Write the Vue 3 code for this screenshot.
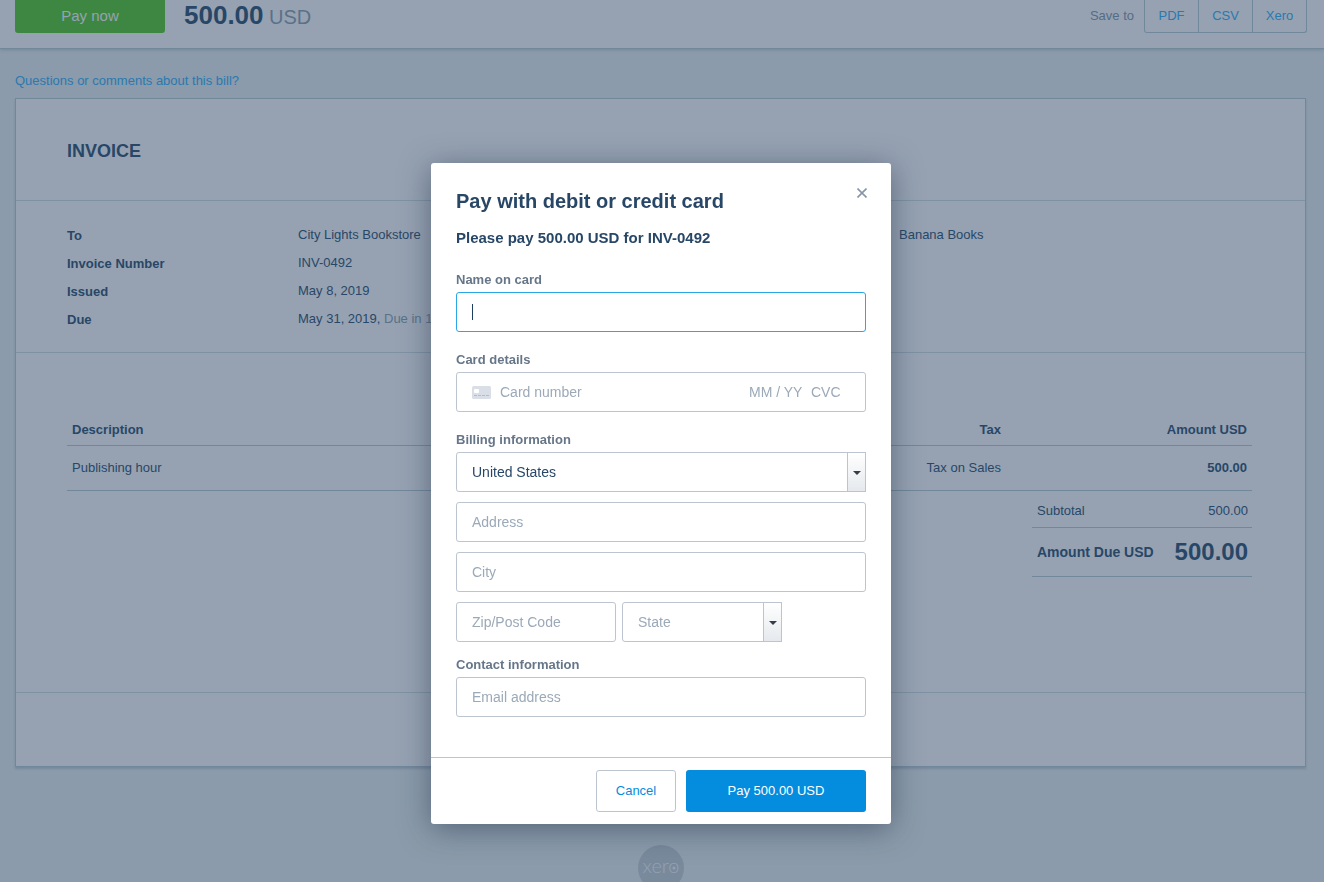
<script setup>
import { ref } from 'vue'

const open = ref(true)
const country = ref('United States')
const state = ref('')
const name = ref('')

const details = [
  { label: 'To', value: 'City Lights Bookstore' },
  { label: 'Invoice Number', value: 'INV-0492' },
  { label: 'Issued', value: 'May 8, 2019' },
  { label: 'Due', value: 'May 31, 2019,', note: 'Due in 1' },
]
</script>

<template>
  <div class="page">
    <header class="topbar">
      <button class="pay-now" type="button" @click="open = true">Pay now</button>
      <p class="total"><strong>500.00</strong> USD</p>
      <span class="save-label">Save to</span>
      <nav class="save-group">
        <a href="#pdf">PDF</a>
        <a href="#csv">CSV</a>
        <a href="#xero">Xero</a>
      </nav>
    </header>

    <main class="content">
      <a class="questions" href="#comments">Questions or comments about this bill?</a>

      <article class="invoice">
        <section class="heading"><h1>INVOICE</h1></section>

        <section class="details">
          <dl>
            <div v-for="d in details" :key="d.label" class="detail">
              <dt>{{ d.label }}</dt>
              <dd>{{ d.value }} <span v-if="d.note" class="note">{{ d.note }}</span></dd>
            </div>
          </dl>
          <p class="from">Banana Books</p>
        </section>

        <section class="lines">
          <table class="items">
            <thead>
              <tr><th class="left">Description</th><th>Tax</th><th class="amount">Amount USD</th></tr>
            </thead>
            <tbody>
              <tr><td class="left">Publishing hour</td><td>Tax on Sales</td><td><strong>500.00</strong></td></tr>
            </tbody>
          </table>
          <table class="totals">
            <tbody>
              <tr class="subtotal"><th>Subtotal</th><td>500.00</td></tr>
              <tr class="due"><th>Amount Due USD</th><td>500.00</td></tr>
            </tbody>
          </table>
        </section>

        <section class="foot"></section>
      </article>

      <svg class="logo" viewBox="0 0 46 46" role="img" aria-label="xero">
        <circle cx="23" cy="23" r="23" fill="#7a8a9d" />
        <text x="23" y="28" text-anchor="middle">xero</text>
        <circle cx="36" cy="23" r="1.5" fill="#93a1b1" />
      </svg>
    </main>

    <div v-if="open" class="overlay">
      <form class="modal" role="dialog" aria-labelledby="pay-title" @submit.prevent>
        <div class="body">
          <div class="title-row">
            <h2 id="pay-title">Pay with debit or credit card</h2>
            <button class="close" type="button" aria-label="Close" @click="open = false">
              <svg viewBox="0 0 10 10"><path d="M0.5 0.5L9.5 9.5M9.5 0.5L0.5 9.5" /></svg>
            </button>
          </div>
          <p class="summary">Please pay 500.00 USD for INV-0492</p>

          <div class="field">
            <label for="name">Name on card</label>
            <div class="control">
              <input id="name" v-model="name" class="box focused" type="text" />
              <span v-if="!name" class="caret"></span>
            </div>
          </div>

          <div class="field">
            <label for="card">Card details</label>
            <div class="box card-box">
              <svg class="card-icon" viewBox="0 0 19 13">
                <rect width="19" height="13" rx="1.5" fill="#dadfe7" />
                <rect x="2" y="3" width="5" height="4" rx="1" fill="#fff" />
                <path d="M2 9.5H17" stroke="#b3bdca" stroke-dasharray="3 1" />
              </svg>
              <input id="card" class="number" type="text" placeholder="Card number" />
              <input class="expiry" type="text" placeholder="MM / YY" aria-label="Expiry date" />
              <input class="cvc" type="text" placeholder="CVC" aria-label="CVC" />
            </div>
          </div>

          <div class="field billing">
            <label for="country">Billing information</label>
            <div class="stack">
              <div class="control">
                <select id="country" v-model="country" class="box"><option>United States</option></select>
                <span class="arrow"><svg viewBox="0 0 8 4"><path d="M0 0H8L4 4Z" /></svg></span>
              </div>
              <input class="box" type="text" placeholder="Address" aria-label="Address" />
              <input class="box" type="text" placeholder="City" aria-label="City" />
              <div class="pair">
                <input class="box" type="text" placeholder="Zip/Post Code" aria-label="Zip/Post Code" />
                <div class="control">
                  <select v-model="state" class="box empty" aria-label="State"><option value="">State</option></select>
                  <span class="arrow"><svg viewBox="0 0 8 4"><path d="M0 0H8L4 4Z" /></svg></span>
                </div>
              </div>
            </div>
          </div>

          <div class="field">
            <label for="email">Contact information</label>
            <input id="email" class="box" type="email" placeholder="Email address" />
          </div>
        </div>

        <footer class="actions">
          <button class="cancel" type="button" @click="open = false">Cancel</button>
          <button class="pay" type="submit">Pay 500.00 USD</button>
        </footer>
      </form>
    </div>
  </div>
</template>

<style>
body {
  margin: 0;
  background: #8b9bab;
}
</style>

<style scoped>
.page {
  height: 100vh;
  overflow: hidden;
  background: #8b9bab;
  color: #284767;
  font: 13px/20px "Liberation Sans", Arial, sans-serif;
}
.page *,
.page *::before {
  box-sizing: border-box;
}
h1, h2, p, dl, dd {
  margin: 0;
}
a {
  color: #2a79af;
  text-decoration: none;
}
button, input, select {
  font-family: inherit;
  margin: 0;
}

.topbar {
  display: flex;
  align-items: flex-start;
  padding: 0 17px 15px 15px;
  border-bottom: 1px solid #71889b;
  background: #96a2b2;
  box-shadow: 0 1px 3px rgba(80, 104, 128, 0.4);
}
.pay-now {
  width: 150px;
  height: 33px;
  padding: 0 0 2px;
  border: 0;
  border-radius: 0 0 3px 3px;
  background: #3e8742;
  color: #96a2b2;
  font-size: 15px;
}
.total {
  flex: 1;
  margin-left: 19px;
  color: #5a7189;
  font-size: 20px;
  line-height: 30px;
}
.total strong {
  color: #284767;
  font-size: 26px;
}
.save-label {
  margin-right: 10px;
  color: #556c85;
  line-height: 32px;
}
.save-group {
  display: flex;
  border: 1px solid #71889b;
  border-top: 0;
  border-radius: 0 0 3px 3px;
}
.save-group a {
  width: 53px;
  line-height: 32px;
  text-align: center;
}
.save-group a + a {
  width: 54px;
  border-left: 1px solid #71889b;
}

.content {
  display: flex;
  flex-direction: column;
  padding: 22px 18px 0 15px;
}
.questions {
  align-self: flex-start;
  margin-bottom: 7px;
}
.invoice {
  border: 1px solid #71889b;
  background: #96a2b2;
  box-shadow: 0 2px 2px rgba(80, 104, 128, 0.35);
}
.invoice section {
  padding: 0 53px 0 51px;
}
.invoice section + section {
  border-top: 1px solid #7f92a4;
}
.heading h1 {
  padding-top: 3px;
  font-size: 18px;
  line-height: 98px;
}
.invoice .details {
  display: flex;
  padding-top: 20px;
  padding-bottom: 19px;
}
.details dl {
  width: 832px;
}
.detail {
  display: flex;
  height: 28px;
  line-height: 28px;
}
.detail dt {
  width: 231px;
  font-weight: bold;
  line-height: 30px;
}
.note {
  color: #5a7189;
}
.from {
  line-height: 28px;
}

.invoice .lines {
  padding-top: 60px;
  padding-bottom: 115px;
}
table {
  border-collapse: collapse;
}
th, td {
  padding: 0 5px;
  text-align: right;
  border-bottom: 1px solid #71889b;
}
.items {
  width: 100%;
}
.items th {
  height: 32px;
  padding-top: 2px;
}
.items td {
  height: 45px;
}
.items .left {
  text-align: left;
}
.items .amount {
  width: 246px;
}
.totals {
  width: 220px;
  margin-left: auto;
}
.totals th {
  text-align: left;
}
.totals td {
  padding: 0 4px;
}
.subtotal th {
  font-weight: normal;
}
.totals .subtotal td, .totals .subtotal th {
  height: 37px;
  padding-top: 4px;
}
.due th {
  height: 49px;
  font-size: 14px;
  white-space: nowrap;
}
.due td {
  font-size: 24px;
  font-weight: bold;
}
.foot {
  height: 74px;
}
.logo {
  flex: none;
  align-self: center;
  width: 46px;
  height: 46px;
  margin-top: 78px;
}
.logo text {
  fill: #93a1b1;
  font: 300 20px Lato, sans-serif;
}

.overlay {
  position: fixed;
  inset: 0;
  display: flex;
  align-items: flex-start;
  justify-content: center;
  padding: 163px 2px 0 0;
}
.modal {
  width: 460px;
  border-radius: 3px;
  background: #fff;
  box-shadow: 0 5px 30px rgba(30, 45, 70, 0.5);
}
.body {
  padding: 25px 25px 40px;
}
.title-row {
  display: flex;
  justify-content: space-between;
  align-items: flex-start;
}
h2 {
  font-size: 20px;
  line-height: 26px;
}
.close {
  display: flex;
  padding: 0;
  margin-right: -1px;
  border: 0;
  background: none;
}
.close svg {
  width: 10px;
  height: 10px;
  fill: none;
  stroke: #8696a8;
  stroke-width: 1.6;
}
.summary {
  margin: 14px 0 22px;
  font-size: 15px;
  font-weight: bold;
}
.field {
  margin-bottom: 18px;
}
.field.billing {
  margin-bottom: 13px;
}
.field:last-child {
  margin-bottom: 0;
}
label {
  display: block;
  margin-bottom: 2px;
  color: #667689;
  font-weight: bold;
}
.control {
  position: relative;
}
.box {
  display: block;
  width: 100%;
  height: 40px;
  padding: 0 15px;
  border: 1px solid #bcc5cf;
  border-radius: 3px;
  outline: 0;
  background: #fff;
  color: #284767;
  font-size: 14px;
  appearance: none;
}
.box.focused {
  border-color: #2ba6e6;
  caret-color: transparent;
}
.caret {
  position: absolute;
  top: 12px;
  left: 16px;
  width: 1px;
  height: 16px;
  background: #1f3f60;
}
.box.empty {
  color: #9ba9b8;
}
input::placeholder {
  color: #9ba9b8;
  opacity: 1;
}
.card-box {
  display: flex;
  align-items: center;
  padding-right: 0;
}
.card-box input {
  padding: 0;
  border: 0;
  outline: 0;
  font-size: 14px;
}
.card-icon {
  width: 19px;
  height: 13px;
  margin-right: 9px;
}
.card-box .number {
  flex: 1;
  min-width: 0;
}
.card-box .expiry {
  width: 62px;
}
.card-box .cvc {
  width: 54px;
}
.stack {
  display: grid;
  gap: 10px;
}
.pair {
  display: grid;
  grid-template-columns: 160px 160px;
  gap: 6px;
}
.arrow {
  position: absolute;
  top: 0;
  right: 0;
  bottom: 0;
  display: flex;
  align-items: center;
  justify-content: center;
  width: 19px;
  padding-top: 2px;
  border: 1px solid #bcc5cf;
  background: linear-gradient(#fff, #e5e9ed);
  pointer-events: none;
}
.arrow svg {
  width: 8px;
  height: 4px;
  fill: #333c48;
}
.actions {
  display: flex;
  justify-content: flex-end;
  gap: 10px;
  padding: 12px 25px;
  border-top: 1px solid #bcc5cf;
}
.actions button {
  height: 42px;
  padding: 0 0 2px;
  border-radius: 3px;
  font-size: 13px;
}
.cancel {
  width: 80px;
  border: 1px solid #bcc5cf;
  background: #fff;
  color: #048cde;
}
.pay {
  width: 180px;
  border: 0;
  background: #048cde;
  color: #fff;
}
</style>
